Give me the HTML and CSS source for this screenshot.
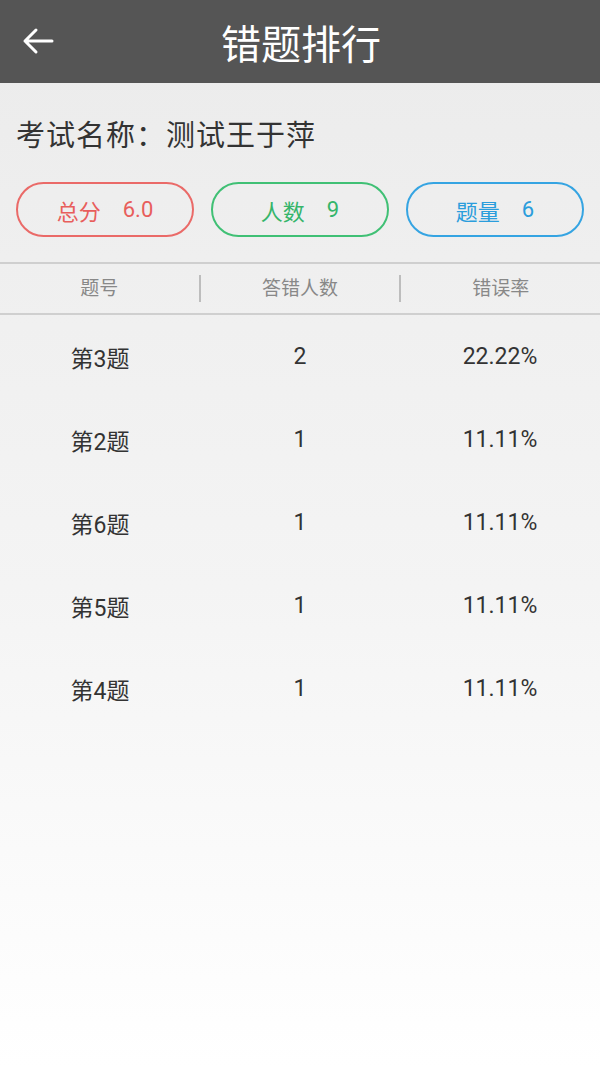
FILE: index.html
```html
<!DOCTYPE html>
<html lang="zh-CN">
<head>
    <meta charset="UTF-8">
    <meta name="viewport" content="width=device-width, initial-scale=1.0">
    <title>错题排行</title>
    <link rel="stylesheet" href="styles.css">
</head>
<body>
    <header class="topbar">
        <svg class="back" width="32" height="28" viewBox="0 0 32 28">
            <path d="M3 14H30M14 3L3 14L14 25" fill="none" stroke="#fff" stroke-width="3" stroke-linecap="round" stroke-linejoin="round"/>
        </svg>
        <h1>错题排行</h1>
    </header>

    <section class="exam">
        <p class="exam-name">考试名称：测试王于萍</p>
        <div class="pills">
            <div class="pill red"><span>总分</span><span>6.0</span></div>
            <div class="pill green"><span>人数</span><span>9</span></div>
            <div class="pill blue"><span>题量</span><span>6</span></div>
        </div>
    </section>

    <div class="table-head">
        <div class="cell">题号</div>
        <div class="cell">答错人数</div>
        <div class="cell">错误率</div>
    </div>

    <div class="rows">
        <div class="row"><div>第3题</div><div>2</div><div>22.22%</div></div>
        <div class="row"><div>第2题</div><div>1</div><div>11.11%</div></div>
        <div class="row"><div>第6题</div><div>1</div><div>11.11%</div></div>
        <div class="row"><div>第5题</div><div>1</div><div>11.11%</div></div>
        <div class="row"><div>第4题</div><div>1</div><div>11.11%</div></div>
    </div>
</body>
</html>
```

FILE: styles.css
```css
* {
    box-sizing: border-box;
    margin: 0;
    padding: 0;
    font-family: Roboto, "Noto Sans CJK SC", sans-serif;
}

html, body {
    height: 100%;
}

body {
    background: linear-gradient(to bottom, #ebebeb 0%, #f4f4f4 55%, #ffffff 100%);
    color: #333;
}

.topbar {
    height: 83px;
    background-color: #555;
    display: flex;
    align-items: center;
    justify-content: center;
    position: relative;
}

.topbar .back {
    position: absolute;
    left: 22px;
    top: 27px;
}

.topbar h1 {
    color: #fff;
    font-size: 40px;
    font-weight: normal;
    margin-left: 2px;
}

.exam {
    padding: 33px 16px 25px 16px;
}

.exam-name {
    font-size: 29px;
    line-height: 40px;
    letter-spacing: 1px;
    color: #333;
}

.pills {
    display: flex;
    gap: 17px;
    margin-top: 26px;
}

.pill {
    flex: 1;
    height: 55px;
    border: 2.5px solid;
    border-radius: 28px;
    display: flex;
    align-items: center;
    justify-content: center;
    gap: 22px;
    font-size: 22px;
}

.pill.red {
    color: #e85e5c;
    border-color: #ea6a68;
}

.pill.green {
    color: #35b56a;
    border-color: #40c075;
}

.pill.blue {
    color: #2a9ddc;
    border-color: #35a4e2;
}

.table-head {
    display: flex;
    height: 53px;
    align-items: center;
    border-top: 2px solid #cfcfcf;
    border-bottom: 2px solid #cfcfcf;
}

.table-head .cell {
    flex: 1;
    text-align: center;
    font-size: 19px;
    color: #888;
    line-height: 27px;
}

.table-head .cell + .cell {
    border-left: 2px solid #bdbdbd;
}

.rows {
    padding-top: 0;
}

.row {
    display: flex;
    height: 83px;
    align-items: center;
    font-size: 23px;
    color: #333;
}

.row div {
    flex: 1;
    text-align: center;
}
```
